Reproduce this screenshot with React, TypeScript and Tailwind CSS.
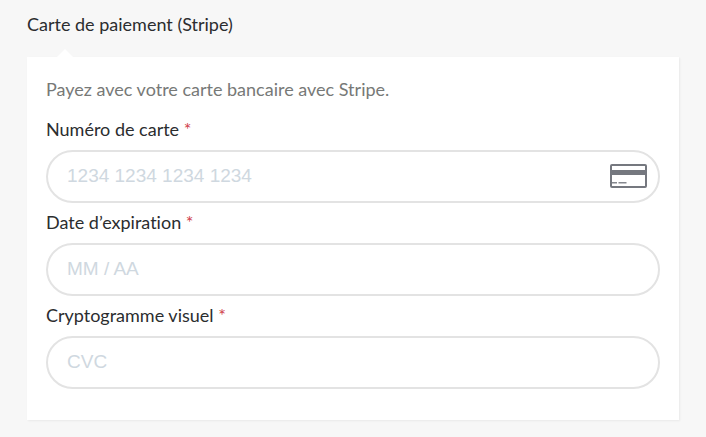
import type { ReactNode } from "react";

type FieldProps = {
  id: string;
  label: string;
  placeholder: string;
  autoComplete: string;
  icon?: ReactNode;
};

function CardIcon() {
  return (
    <svg width="38" height="26" viewBox="0 0 38 26" fill="none" aria-hidden="true">
      <rect x="1" y="2" width="35" height="22" rx="1" stroke="#75787f" strokeWidth="2" />
      <path d="M1 7h35v5H1z" fill="#75787f" />
      <path d="M2 19.7h5M8.5 19.7h8" stroke="#85888e" strokeWidth="1.5" />
    </svg>
  );
}

function Field({ id, label, placeholder, autoComplete, icon }: FieldProps) {
  return (
    <div>
      <label htmlFor={id} className="block pb-0.5 leading-[38px] text-[#2b2d2f]">
        {label} <span className="text-[#d0414b]">*</span>
      </label>
      <div className="flex h-[53px] items-center rounded-full border-2 border-[#e3e3e3] pr-[10px] pb-0.5 pl-[19px]">
        <input
          id={id}
          type="text"
          inputMode="numeric"
          autoComplete={autoComplete}
          placeholder={placeholder}
          className="min-w-0 flex-1 bg-transparent font-['Liberation_Sans',Arial,sans-serif] text-[19px] leading-6 text-[#2b2d2f] outline-none placeholder:text-[#cfd8e0]"
        />
        {icon}
      </div>
    </div>
  );
}

export default function App() {
  return (
    <main className="min-h-screen bg-[#f7f7f7] px-[27px] pt-3 pb-4 font-[Lato,sans-serif] text-[18px] [font-variant-ligatures:none]">
      <h2 className="leading-6 text-[#2b2d2f]">Carte de paiement (Stripe)</h2>
      <section className="relative mt-[21px] bg-white px-[19px] pt-5 pb-[31px] shadow-[1px_1px_2px_rgba(0,0,0,0.06)]">
        <span className="absolute bottom-full left-[30px] h-2 w-4 bg-white [clip-path:polygon(50%_0,100%_100%,0_100%)]" />
        <p className="pb-[9px] leading-6 text-[#777977]">Payez avec votre carte bancaire avec Stripe.</p>
        <form>
          <Field
            id="card-number"
            label="Numéro de carte"
            placeholder="1234 1234 1234 1234"
            autoComplete="cc-number"
            icon={<CardIcon />}
          />
          <Field id="card-expiry" label="Date d’expiration" placeholder="MM / AA" autoComplete="cc-exp" />
          <Field id="card-cvc" label="Cryptogramme visuel" placeholder="CVC" autoComplete="cc-csc" />
        </form>
      </section>
    </main>
  );
}
